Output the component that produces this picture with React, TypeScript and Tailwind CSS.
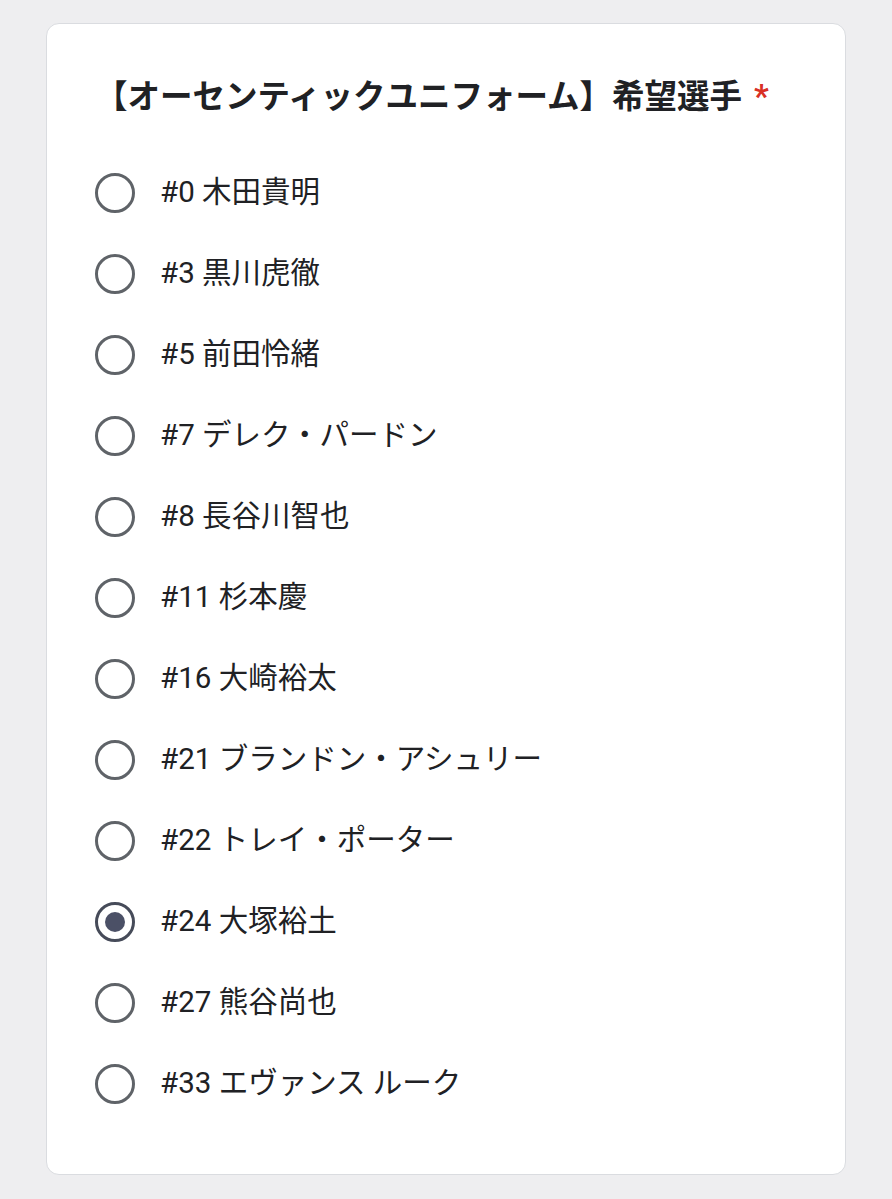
import React from 'react'

const players = [
  '#0 木田貴明',
  '#3 黒川虎徹',
  '#5 前田怜緒',
  '#7 デレク・パードン',
  '#8 長谷川智也',
  '#11 杉本慶',
  '#16 大崎裕太',
  '#21 ブランドン・アシュリー',
  '#22 トレイ・ポーター',
  '#24 大塚裕土',
  '#27 熊谷尚也',
  '#33 エヴァンス ルーク',
]

const selected = '#24 大塚裕土'

export default function App() {
  return (
    <div
      className="min-h-[1199px] bg-[#eeeef0] pt-[23px] pb-[24px]"
      style={{ fontFamily: "Roboto, 'Noto Sans CJK JP', sans-serif" }}
    >
      <div className="mx-[46px] rounded-[13px] border border-[#dadce0] bg-white pl-[48px] pr-6 pt-[49px] pb-[50px]">
        {/* Question title */}
        <h2 className="mb-[31px] text-[32.5px] leading-[48px] font-bold text-[#202124]">
          【オーセンティックユニフォーム】希望選手
          <span className="ml-[12px] text-[#d93025]">*</span>
        </h2>

        {/* Options */}
        <div className="flex flex-col">
          {players.map((name) => {
            const isOn = name === selected
            return (
              <label key={name} className="flex h-[81px] items-center gap-[25px]">
                <span
                  className={
                    isOn
                      ? 'flex h-10 w-10 shrink-0 items-center justify-center rounded-full border-[3.5px] border-[#464b59]'
                      : 'flex h-10 w-10 shrink-0 items-center justify-center rounded-full border-[3.5px] border-[#5f6368]'
                  }
                >
                  {isOn && <span className="h-5 w-5 rounded-full bg-[#4b5066]" />}
                </span>
                <span className="text-[29.5px] leading-none text-[#202124]">{name}</span>
              </label>
            )
          })}
        </div>
      </div>
    </div>
  )
}
